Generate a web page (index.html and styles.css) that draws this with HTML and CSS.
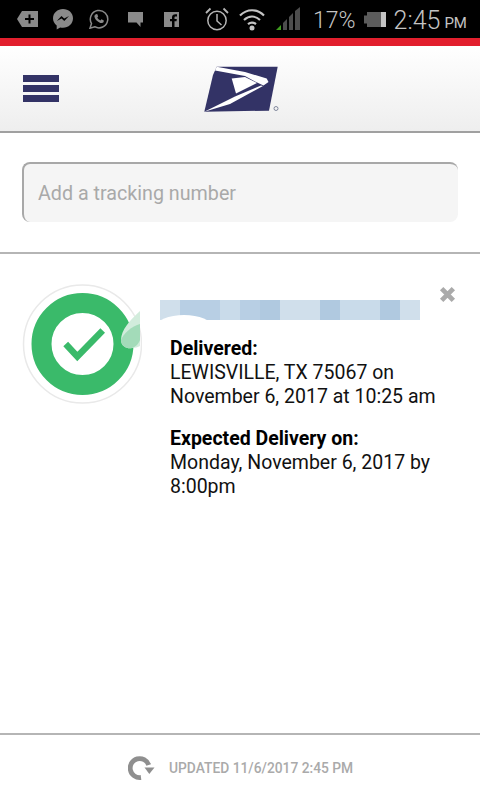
FILE: index.html
```html
<!DOCTYPE html>
<html lang="en">
<head>
    <meta charset="UTF-8">
    <meta name="viewport" content="width=device-width, initial-scale=1.0">
    <title>USPS Tracking</title>
    <link rel="stylesheet" href="styles.css">
</head>
<body>
    <div class="status-bar">
        <svg class="icon-tag" viewBox="0 0 21 16"><path d="M5 0H21V16H5L0 8Z" fill="#8a8a8a"/><path d="M11.500 3.500h2v3.500H17v2h-3.500v3.500h-2V9H8V7h3.500Z" fill="#000"/></svg>
        <svg class="icon-msg" viewBox="0 0 20 21"><path d="M10 0C4.500 0 0 4 0 9.300c0 3 1.400 5.500 3.700 7.200V20.500l3.500-2c.9.200 1.800.3 2.800.3 5.500 0 10-4.100 10-9.500S15.500 0 10 0Z" fill="#8a8a8a"/><path d="M3.800 12 8.500 7l2.700 2.500L16 7l-4.700 5-2.700-2.600Z" fill="#000"/></svg>
        <svg class="icon-wa" viewBox="0 0 20 20"><path d="M1 19.200 2.500 14.500A8.700 8.700 0 1 1 5.700 17.700Z" fill="none" stroke="#8a8a8a" stroke-width="1.500"/><path d="M6.800 5.200 8.200 5l1 2.400-.9 1.200c.6 1.300 1.600 2.200 3 2.900l1.200-1.200 2.300 1.100-.2 1.500c-.6 1-2 1.400-3.300 1-3-1-5-3-5.800-5.800-.3-1.100 0-2 1.300-2.900Z" fill="#8a8a8a"/></svg>
        <svg class="icon-chat" viewBox="0 0 15 15"><path d="M0 0H15V10.500H12.500V15L8.500 10.500H0Z" fill="#8a8a8a"/></svg>
        <svg class="icon-fb" viewBox="0 0 15 15"><path d="M0 0H15V15H10.500V9.300H12.500L12.800 7H10.500V5.600c0-.8.300-1.200 1.200-1.200H13V2.300c-2.900-.5-5 .2-5 3V7H6V9.300H8V15H0Z" fill="#8a8a8a"/></svg>
        <svg class="icon-alarm" viewBox="0 0 24 24"><circle cx="12" cy="13.500" r="9.200" fill="none" stroke="#b5b5b5" stroke-width="1.500"/><path d="M12 7v7l4.500 4" fill="none" stroke="#b5b5b5" stroke-width="1.500"/><path d="M1 6 5.500 1.500M23 6 18.500 1.500" stroke="#b5b5b5" stroke-width="1.800"/></svg>
        <svg class="icon-wifi" viewBox="0 0 26 24"><g fill="none" stroke="#c4c4c4" stroke-width="2.200"><path d="M1 8.500C8 1.500 18 1.500 25 8.500"/><path d="M5 13C10 8.500 16 8.500 21 13"/><path d="M9 17.200C11.500 15.200 14.500 15.200 17 17.200"/></g><circle cx="13" cy="21" r="2.500" fill="#c4c4c4"/></svg>
        <svg class="icon-signal" viewBox="0 0 24 24"><path d="M0 23 5 18V23Z" fill="#3f9b1e"/><path d="M7 16 11 12V23H7Z M13 10 17 6V23H13Z M19 4 24 0V23H19Z" fill="#4d4d4d"/></svg>
        <span class="status-pct">17%</span>
        <svg class="icon-batt" viewBox="0 0 24 15"><path d="M2 3.500H5V0H19V15H5V11.500H2Z" fill="#5c5c5c"/><rect x="19" y="0" width="5" height="15" fill="#c4c4c4"/></svg>
        <span class="status-time">2:45</span>
        <span class="status-ampm">PM</span>
    </div>
    <div class="red-bar"></div>

    <header class="header">
        <div class="menu"><span></span><span></span><span></span></div>
        <svg class="logo" viewBox="0 0 90 60">
            <path d="M21.700 6.700H82.700L74 50.700L9.300 51.700L18 15Z" fill="#333366"/>
            <path d="M21.700 6.700 50 12 71.700 18.500 73.500 22 68.500 25.500 60 21.500 50 16 20 10.500Z" fill="#fff"/>
            <path d="M36.700 18.500 50 17 62 23 41 33.500Z" fill="#fff"/>
            <path d="M9.300 51.700 40 36.500 66 25.500 68 26 56 32.500 35 44Z" fill="#fff"/>
            <circle cx="81" cy="48.500" r="2" fill="none" stroke="#666e88" stroke-width=".8"/>
        </svg>
    </header>

    <div class="search">
        <input class="search-input" type="text" placeholder="Add a tracking number">
    </div>

    <main class="card">
        <svg class="seal" viewBox="0 0 120 120">
            <circle cx="60.500" cy="60" r="59" fill="#fff" stroke="#e9e9e9" stroke-width="1.500"/>
            <circle cx="60.500" cy="60" r="41" fill="none" stroke="#3aba6a" stroke-width="20"/>
            <path d="M43.700 60 55.300 72.500 80.700 46.500" fill="none" stroke="#3aba6a" stroke-width="6.500"/>
            <path d="M118 27C108 36 99 46 99 56C99 63 106 65 110 64C113 64 116 63 118 62Z" fill="#d2ecdc"/>
            <path d="M118 40C110 42 101 50 99 56C99 63 106 65 110 64C113 63 116 61 118 56Z" fill="#a3dbb9"/>
        </svg>
        <div class="details">
            <div class="redacted">
                <span class="px-a"></span><span class="px-b"></span><span class="px-b"></span><span class="px-c"></span><span class="px-b"></span><span class="px-d"></span><span class="px-a"></span><span class="px-a"></span><span class="px-d"></span><span class="px-c"></span><span class="px-c"></span><span class="px-d"></span><span class="px-a"></span>
                <div class="smudge"></div>
            </div>
            <p class="detail"><strong>Delivered:</strong><br>LEWISVILLE, TX 75067 on<br>November 6, 2017 at 10:25 am</p>
            <p class="detail"><strong>Expected Delivery on:</strong><br>Monday, November 6, 2017 by<br>8:00pm</p>
        </div>
        <svg class="close" viewBox="0 0 16 16"><path d="M2.500 2.500 13.500 13.500M13.500 2.500 2.500 13.500" stroke="#aaa" stroke-width="4.500"/></svg>
    </main>

    <footer class="footer">
        <svg class="refresh" viewBox="0 0 27 26"><path d="M20.700 10A9.500 9.500 0 1 0 13 22.500" fill="none" stroke="#8f8f8f" stroke-width="4.800"/><path d="M16.500 12.500H26.500L21.300 19Z" fill="#8f8f8f"/></svg>
        <span class="updated">UPDATED 11/6/2017 2:45 PM</span>
    </footer>
</body>
</html>
```

FILE: styles.css
```css
* {
    box-sizing: border-box;
}
body {
    display: flex;
    flex-direction: column;
    height: 800px;
    margin: 0;
    background-color: #fff;
    font-family: Roboto, Arial, sans-serif;
    color: #000;
    overflow: hidden;
}
svg {
    display: block;
    flex: none;
}
.status-bar {
    display: flex;
    align-items: center;
    height: 38px;
    padding-left: 17px;
    background-color: #000;
    color: #c4c4c4;
    font-weight: 300;
}
.icon-tag { width: 21px; height: 16px; }
.icon-msg { width: 20px; height: 21px; margin-left: 15px; }
.icon-wa { width: 20px; height: 20px; margin-left: 16px; }
.icon-chat { width: 15px; height: 15px; margin-left: 19px; }
.icon-fb { width: 15px; height: 15px; margin-left: 21px; }
.icon-alarm { width: 24px; height: 24px; margin-left: 26px; }
.icon-wifi { width: 26px; height: 24px; margin-left: 10px; }
.icon-signal { width: 24px; height: 24px; margin-left: 11px; }
.icon-batt { width: 24px; height: 15px; margin-left: 6px; }
.status-pct {
    margin-left: 13px;
    margin-top: 2px;
    font-size: 23px;
}
.status-time {
    margin-left: 8px;
    margin-top: 2px;
    font-size: 25px;
}
.status-ampm {
    margin-left: 4px;
    margin-top: 7px;
    font-size: 15px;
    font-weight: 400;
}
.red-bar {
    height: 8px;
    background-color: #e21f2d;
}
.header {
    position: relative;
    display: flex;
    align-items: center;
    height: 87px;
    padding-left: 23px;
    border-bottom: 2px solid #a0a0a0;
    background: linear-gradient(#fff, #eeeeee);
}
.menu {
    display: flex;
    flex-direction: column;
    gap: 3px;
    width: 36px;
}
.menu span {
    height: 7px;
    background-color: #333366;
}
.logo {
    width: 90px;
    height: 60px;
    margin-left: 136px;
    margin-top: 2px;
    filter: blur(0.4px);
}
.search {
    height: 121px;
    padding: 29px 22px 0;
    border-bottom: 2px solid #b5b5b5;
}
.search-input {
    display: block;
    width: 436px;
    height: 60px;
    padding: 0 14px;
    border: none;
    border-top: 2px solid #a8a8a8;
    border-left: 2px solid #a8a8a8;
    border-radius: 8px;
    background-color: #f5f5f5;
    font-family: Roboto, Arial, sans-serif;
    font-size: 19.7px;
    outline: none;
}
.search-input::placeholder {
    color: #a9a9a9;
    opacity: 1;
}
.card {
    position: relative;
    flex: 1;
    display: flex;
    padding: 30px 0 0 22px;
}
.seal {
    width: 120px;
    height: 120px;
}
.details {
    padding-top: 16px;
    margin-left: 28px;
}
.redacted {
    position: relative;
    display: grid;
    grid-template-columns: repeat(13, 20px);
    height: 20px;
    margin-left: -10px;
    margin-bottom: 17px;
}
.px-a { background-color: #d0dfeb; }
.px-b { background-color: #b8cfe4; }
.px-c { background-color: #c9dbea; }
.px-d { background-color: #b0c9e0; }
.smudge {
    position: absolute;
    left: -4px;
    top: 15px;
    width: 56px;
    height: 24px;
    border-radius: 50%;
    background-color: #fff;
}
.detail {
    margin: 0 0 18px;
    font-size: 19.5px;
    line-height: 24px;
    color: #111;
}
.detail strong {
    font-weight: 700;
    color: #000;
}
.close {
    position: absolute;
    top: 32px;
    right: 24px;
    width: 17px;
    height: 17px;
}
.footer {
    display: flex;
    align-items: center;
    height: 67px;
    padding-left: 128px;
    border-top: 2px solid #b5b5b5;
}
.refresh {
    width: 27px;
    height: 26px;
}
.updated {
    margin-left: 14px;
    font-size: 13.8px;
    font-weight: 500;
    color: #aaa;
}
```
